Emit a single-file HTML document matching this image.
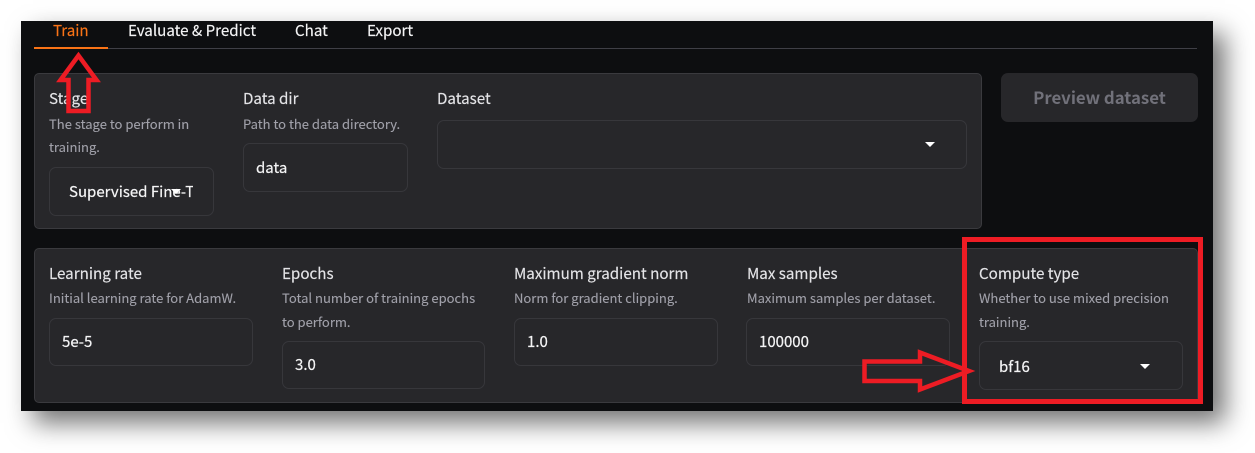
<!DOCTYPE html>
<html>
<head>
<meta charset="utf-8">
<style>
html,body{margin:0;padding:0;background:#fff;}
body{width:1255px;height:453px;position:relative;overflow:hidden;font-family:"Noto Sans CJK SC","Noto Sans CJK JP","Liberation Sans",sans-serif;}
.abs,.t,.l,.d,.v,.box,.panel{position:absolute;white-space:nowrap;}
#app{position:absolute;left:21px;top:21px;width:1192px;height:390px;background:#0d0e10;box-shadow:12px 12px 24px rgba(0,0,0,.55);}
.panel{background:#27272a;border:1px solid #3a3a3e;border-radius:5px;box-sizing:border-box;}
.box{background:#27272a;border:1px solid #37373b;border-radius:7px;box-sizing:border-box;}
.t{font-size:15.15px;line-height:20px;color:#f4f4f5;top:20px;-webkit-text-stroke:.15px currentColor;}
.l{font-size:15.17px;line-height:20px;color:#e4e4e7;-webkit-text-stroke:.15px currentColor;}
.d{font-size:13.02px;line-height:20px;color:#a1a1aa;-webkit-text-stroke:.1px currentColor;}
.v{font-size:15px;line-height:20px;color:#f4f4f5;-webkit-text-stroke:.2px currentColor;}
.c{position:absolute;width:0;height:0;border-left:5.5px solid transparent;border-right:5.5px solid transparent;border-top:5.5px solid #fff;}
</style>
</head>
<body>
<div id="app"></div>

<div class="t" style="left:53px;color:#f97316;">Train</div>
<div class="t" style="left:128px;">Evaluate &amp; Predict</div>
<div class="t" style="left:295px;">Chat</div>
<div class="t" style="left:367px;">Export</div>
<div class="abs" style="left:34px;top:47.500px;width:1163px;height:1.500px;background:#3f3f46;"></div>
<div class="abs" style="left:34px;top:47px;width:74px;height:2px;background:#f97316;"></div>

<div class="panel" style="left:34px;top:73px;width:948px;height:156px;"></div>
<div class="abs" style="left:1001px;top:73px;width:197px;height:49px;background:#27272a;border-radius:7px;color:#71717a;font-size:16.800px;font-weight:700;line-height:49px;text-align:center;">Preview dataset</div>

<div class="l" style="left:49px;top:88px;">Stage</div>
<div class="d" style="left:49px;top:114px;">The stage to perform in</div>
<div class="d" style="left:49px;top:137px;">training.</div>
<div class="box" style="left:49px;top:167px;width:165px;height:49px;"></div>
<div class="v" style="left:69px;top:182px;width:124px;overflow:hidden;">Supervised Fine-Tuning</div>
<div class="c" style="left:171px;top:189px;"></div>

<div class="l" style="left:243px;top:88px;">Data dir</div>
<div class="d" style="left:243px;top:114px;">Path to the data directory.</div>
<div class="box" style="left:243px;top:143px;width:165px;height:49px;"></div>
<div class="v" style="left:256px;top:157.500px;">data</div>

<div class="l" style="left:437px;top:88px;">Dataset</div>
<div class="box" style="left:437px;top:120px;width:530px;height:49px;"></div>
<div class="c" style="left:925px;top:142px;"></div>

<div class="panel" style="left:34px;top:248px;width:1164px;height:155px;"></div>

<div class="l" style="left:49px;top:263px;">Learning rate</div>
<div class="d" style="left:49px;top:288px;">Initial learning rate for AdamW.</div>
<div class="box" style="left:49px;top:318px;width:204px;height:48px;"></div>
<div class="v" style="left:62px;top:332px;">5e-5</div>

<div class="l" style="left:282px;top:263px;">Epochs</div>
<div class="d" style="left:282px;top:288px;">Total number of training epochs</div>
<div class="d" style="left:282px;top:312px;">to perform.</div>
<div class="box" style="left:282px;top:341px;width:203px;height:48px;"></div>
<div class="v" style="left:295px;top:355px;">3.0</div>

<div class="l" style="left:514px;top:263px;">Maximum gradient norm</div>
<div class="d" style="left:514px;top:288px;">Norm for gradient clipping.</div>
<div class="box" style="left:514px;top:318px;width:204px;height:48px;"></div>
<div class="v" style="left:527px;top:332px;">1.0</div>

<div class="l" style="left:747px;top:263px;">Max samples</div>
<div class="d" style="left:747px;top:288px;">Maximum samples per dataset.</div>
<div class="box" style="left:746px;top:318px;width:204px;height:48px;"></div>
<div class="v" style="left:759px;top:332px;">100000</div>

<div class="l" style="left:979px;top:263px;">Compute type</div>
<div class="d" style="left:979px;top:288px;">Whether to use mixed precision</div>
<div class="d" style="left:979px;top:312px;">training.</div>
<div class="box" style="left:979px;top:341px;width:204px;height:49px;"></div>
<div class="v" style="left:999px;top:356.500px;">bf16</div>
<div class="c" style="left:1140px;top:364px;"></div>

<svg width="1255" height="453" style="position:absolute;left:0;top:0;" fill="none" stroke="#ed1c24">
<path d="M78.500 55.500 L60.500 80 L68.500 80 L68.500 111 L88.500 111 L88.500 80 L96.500 80 Z" stroke-width="4.500" stroke-miterlimit="10"/>
<rect x="964.500" y="239.500" width="236" height="162" stroke-width="5"/>
<path d="M864.500 361.500 L920 361.500 L920 352.500 L969 371 L920 389.500 L920 381 L864.500 381 Z" stroke-width="4.500" stroke-miterlimit="10"/>
</svg>
</body>
</html>
